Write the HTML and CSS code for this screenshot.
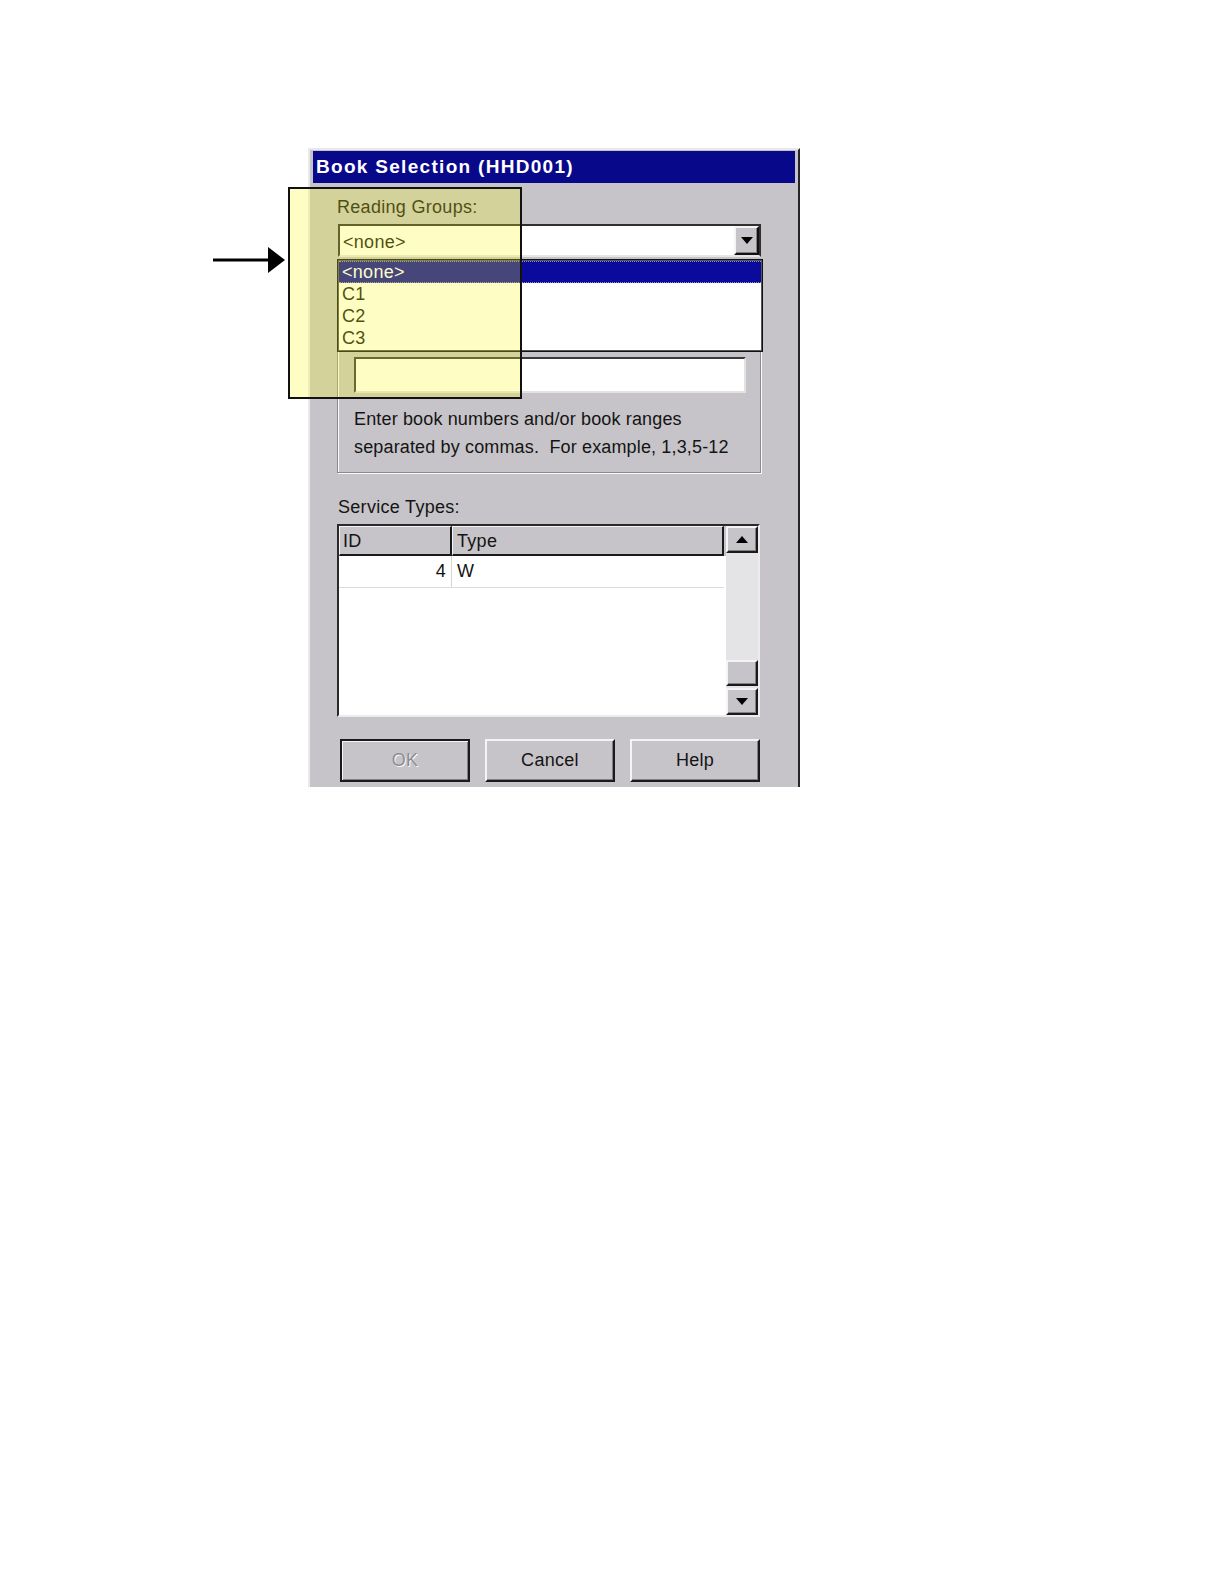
FILE: index.html
```html
<!DOCTYPE html>
<html lang="en">
<head>
<meta charset="utf-8">
<title>Book Selection (HHD001)</title>
<link rel="stylesheet" href="styles.css">
</head>
<body>
<div class="page">
  <div class="window">
    <div class="titlebar">Book Selection (HHD001)</div>
    <div class="client">
      <div class="label">Reading Groups:</div>
      <div class="combo-wrap">
        <div class="combo">
          <span class="combo-value">&lt;none&gt;</span>
          <span class="combo-btn"><svg width="12" height="7" viewBox="0 0 12 7"><polygon points="0,0 12,0 6,7" fill="#000"/></svg></span>
        </div>
        <ul class="droplist">
          <li class="opt selected">&lt;none&gt;</li>
          <li class="opt">C1</li>
          <li class="opt">C2</li>
          <li class="opt">C3</li>
        </ul>
      </div>
      <div class="group">
        <div class="textbox"></div>
        <p class="hint">Enter book numbers and/or book ranges<br>separated by commas.&nbsp; For example, 1,3,5-12</p>
      </div>
      <div class="label label-service">Service Types:</div>
      <div class="listview">
        <div class="table">
          <div class="thead">
            <div class="th th-id">ID</div>
            <div class="th th-type">Type</div>
          </div>
          <div class="tr">
            <div class="td td-id">4</div>
            <div class="td td-type">W</div>
          </div>
        </div>
        <div class="scrollbar">
          <div class="sb-btn"><svg width="12" height="7" viewBox="0 0 12 7"><polygon points="0,7 12,7 6,0" fill="#000"/></svg></div>
          <div class="sb-track"></div>
          <div class="sb-thumb"></div>
          <div class="sb-btn"><svg width="12" height="7" viewBox="0 0 12 7"><polygon points="0,0 12,0 6,7" fill="#000"/></svg></div>
        </div>
      </div>
      <div class="buttons">
        <div class="btn btn-default disabled">OK</div>
        <div class="btn">Cancel</div>
        <div class="btn">Help</div>
      </div>
    </div>
  </div>
  <svg class="arrow" width="76" height="34" viewBox="0 0 76 34"><line x1="0" y1="16" x2="60" y2="16" stroke="#000" stroke-width="3"/><polygon points="55,3 72,16 55,29" fill="#000"/></svg>
  <div class="highlight"></div>
</div>
</body>
</html>
```
FILE: styles.css
```css
* { box-sizing: border-box; }
body {
  margin: 0;
  background: #fff;
  font-family: "Liberation Sans", Arial, sans-serif;
  color: #141414;
}
.page {
  position: relative;
  width: 1224px;
  height: 1584px;
  padding: 148px 0 0 308px;
}
.window {
  width: 492px;
  height: 639px;
  overflow: hidden;
  background: #c6c4c8;
  border-left: 2px solid #e9e8ea;
  border-top: 2px solid #e9e8ea;
  border-right: 2px solid #262626;
  padding: 1px 3px 0 3px;
}
.titlebar {
  height: 32px;
  background: #08088a;
  color: #fff;
  font-weight: bold;
  font-size: 19px;
  letter-spacing: 1.3px;
  padding-left: 3px;
  display: flex;
  align-items: center;
}
.client {
  padding: 14px 34px 0 24px;
}
.label {
  font-size: 18px;
  line-height: 20px;
  letter-spacing: 0.3px;
  height: 20px;
}
.combo-wrap {
  position: relative;
  margin-top: 7px;
}
.combo {
  margin-left: 1px;
  width: 423px;
  height: 33px;
  background: #fff;
  border-top: 2px solid #303030;
  border-left: 2px solid #303030;
  border-right: 2px solid #303030;
  border-bottom: 2px solid #e6e6e6;
  display: flex;
  align-items: center;
  justify-content: space-between;
}
.combo-value {
  font-size: 18px;
  letter-spacing: 0.3px;
  padding-left: 3px;
  padding-top: 3px;
}
.combo-btn {
  width: 25px;
  height: 29px;
  background: #c6c4c8;
  border-top: 2px solid #f4f4f4;
  border-left: 2px solid #f4f4f4;
  border-right: 2px solid #111;
  border-bottom: 2px solid #111;
  box-shadow: inset -1px -1px 0 #808080;
  display: flex;
  align-items: center;
  justify-content: center;
}
.droplist {
  position: absolute;
  z-index: 2;
  top: 35px;
  left: 0;
  width: 426px;
  height: 93px;
  margin: 0;
  padding: 1px 1px;
  list-style: none;
  background: #fff;
  border: 1px solid #111;
  box-shadow: 0 0 0 1px #555 inset;
}
.opt {
  height: 22px;
  line-height: 22px;
  font-size: 18px;
  letter-spacing: 0.3px;
  padding-left: 3px;
}
.opt.selected {
  background: #0a0a9c;
  color: #fff;
  border-top: 1px dotted #9090c0;
  border-bottom: 1px dotted #9090c0;
  line-height: 20px;
}
.group {
  margin-top: 23px;
  width: 424px;
  border: 1px solid #8a8a8e;
  box-shadow: inset 1px 1px 0 #fbfbfb, 1px 1px 0 #fbfbfb;
  padding: 76px 14px 11px 16px;
}
.textbox {
  width: 392px;
  height: 36px;
  background: #fff;
  border-top: 2px solid #3a3a3a;
  border-left: 2px solid #3a3a3a;
  border-right: 2px solid #e2e2e2;
  border-bottom: 2px solid #e2e2e2;
}
.hint {
  margin: 12px 0 0 0;
  font-size: 18px;
  line-height: 28px;
  letter-spacing: 0.15px;
}
.label-service {
  margin-top: 24px;
  margin-left: 1px;
}
.listview {
  margin-top: 7px;
  width: 423px;
  height: 193px;
  background: #fff;
  border-top: 2px solid #2a2a2a;
  border-left: 2px solid #2a2a2a;
  border-right: 2px solid #ececec;
  border-bottom: 2px solid #ececec;
  display: flex;
}
.table {
  width: 387px;
  background: #fff;
}
.thead {
  display: flex;
  height: 30px;
  background: #c6c4c8;
}
.th {
  height: 30px;
  font-size: 18px;
  letter-spacing: 0.3px;
  line-height: 28px;
  padding-left: 3px;
  background: #c6c4c8;
  border-top: 1px solid #f4f4f4;
  border-left: 1px solid #f4f4f4;
  border-right: 2px solid #1a1a1a;
  border-bottom: 2px solid #1a1a1a;
}
.th-id { width: 113px; }
.th-type { width: 272px; padding-left: 4px; }
.tr {
  display: flex;
  height: 32px;
  border-bottom: 1px solid #dcdcdc;
  width: 385px;
}
.td {
  font-size: 18px;
  line-height: 31px;
  letter-spacing: 0.3px;
}
.td-id {
  width: 113px;
  text-align: right;
  padding-right: 5px;
  border-right: 1px solid #d4d4d4;
}
.td-type {
  padding-left: 5px;
}
.scrollbar {
  width: 32px;
  display: flex;
  flex-direction: column;
  background: #e4e4e6;
}
.sb-btn, .sb-thumb {
  background: #c6c4c8;
  border-top: 2px solid #f4f4f4;
  border-left: 2px solid #f4f4f4;
  border-right: 2px solid #1a1a1a;
  border-bottom: 2px solid #1a1a1a;
  box-shadow: inset -1px -1px 0 #808080;
  display: flex;
  align-items: center;
  justify-content: center;
}
.sb-btn { height: 27px; }
.sb-track { flex: 1; background: #e4e4e6; }
.sb-thumb { height: 26px; margin-bottom: 2px; }
.buttons {
  margin-top: 22px;
  padding-left: 3px;
  display: flex;
  gap: 15px;
}
.btn {
  width: 130px;
  height: 43px;
  background: #c6c4c8;
  border-top: 2px solid #f4f4f4;
  border-left: 2px solid #f4f4f4;
  border-right: 2px solid #1a1a1a;
  border-bottom: 2px solid #1a1a1a;
  box-shadow: inset -1px -1px 0 #808080;
  font-size: 18px;
  letter-spacing: 0.3px;
  display: flex;
  align-items: center;
  justify-content: center;
}
.btn-default {
  border: 2px solid #1a1a1a;
  box-shadow: inset 1px 1px 0 #f4f4f4, inset -1px -1px 0 #808080;
}
.btn.disabled {
  color: #8e8e92;
  text-shadow: 1px 1px 0 #fafafa;
}
.arrow {
  position: absolute;
  left: 213px;
  top: 244px;
}
.highlight {
  position: absolute;
  z-index: 5;
  left: 288px;
  top: 187px;
  width: 234px;
  height: 212px;
  border: 2px solid #111;
  background: rgba(250, 250, 20, 0.25);
}
```
